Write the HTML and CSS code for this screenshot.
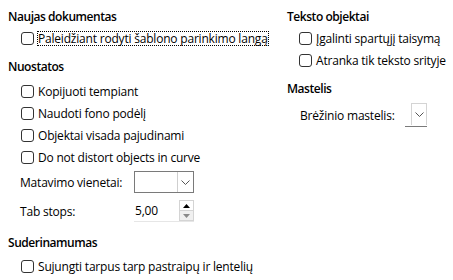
FILE: index.html
```html
<!DOCTYPE html>
<html lang="lt">
<head>
<meta charset="utf-8">
<link rel="stylesheet" href="styles.css">
</head>
<body>
<div class="page">
  <div class="col left">
    <div class="heading h1">Naujas dokumentas</div>
    <label class="row"><span class="box"></span><span class="focus">Paleidžiant rodyti šablono parinkimo langą</span></label>

    <div class="heading h2">Nuostatos</div>
    <label class="row first"><span class="box"></span><span>Kopijuoti tempiant</span></label>
    <label class="row"><span class="box"></span><span>Naudoti fono podėlį</span></label>
    <label class="row"><span class="box"></span><span>Objektai visada pajudinami</span></label>
    <label class="row"><span class="box"></span><span>Do not distort objects in curve</span></label>

    <div class="field combo-row">
      <span class="flabel">Matavimo vienetai:</span>
      <span class="combo"><span class="combo-btn"><svg width="9" height="5" viewBox="0 0 9 5"><path d="M0.5 0.5 L4.5 4.5 L8.5 0.5" fill="none" stroke="#555" stroke-width="1"/></svg></span></span>
    </div>
    <div class="field spin-row">
      <span class="flabel">Tab stops:</span>
      <span class="spin"><span class="spin-val">5,00</span><span class="spin-btns"><span class="up"><svg width="7" height="4" viewBox="0 0 7 4"><path d="M0 4 L3.5 0 L7 4 Z" fill="#000"/></svg></span><span class="down"><svg width="7" height="4" viewBox="0 0 7 4"><path d="M0 0 L3.5 4 L7 0 Z" fill="#8a8a8a"/></svg></span></span></span>
    </div>

    <div class="heading h3">Suderinamumas</div>
    <label class="row last"><span class="box"></span><span>Sujungti tarpus tarp pastraipų ir lentelių</span></label>
  </div>

  <div class="col right">
    <div class="heading h1">Teksto objektai</div>
    <label class="row"><span class="box"></span><span>Įgalinti spartųjį taisymą</span></label>
    <label class="row"><span class="box"></span><span>Atranka tik teksto srityje</span></label>

    <div class="heading h4">Mastelis</div>
    <div class="field scale-row">
      <span class="flabel">Brėžinio mastelis:</span>
      <span class="mini-combo"><span class="mini-btn"><svg width="9" height="5" viewBox="0 0 9 5"><path d="M0.5 0.5 L4.5 4.5 L8.5 0.5" fill="none" stroke="#555" stroke-width="1"/></svg></span></span>
    </div>
  </div>
</div>
</body>
</html>
```

FILE: styles.css
```css
html, body {
  margin: 0;
  padding: 0;
  background: #ffffff;
}
body {
  font-family: "Open Sans", "Noto Sans", "Liberation Sans", sans-serif;
  font-size: 12px;
  letter-spacing: -0.2px;
  color: #000;
  width: 453px;
  height: 280px;
  overflow: hidden;
}
.page {
  display: flex;
  padding-top: 7px;
}
.col {
  display: flex;
  flex-direction: column;
}
.left {
  padding-left: 8px;
  width: 279px;
}
.right {
  padding-left: 0;
}
.heading {
  font-weight: 600;
  letter-spacing: -0.45px;
  height: 20px;
  line-height: 20px;
}
.h2 { margin-top: 8px; }
.h3 { margin-top: 11px; }
.h4 { margin-top: 8px; }
.row {
  display: flex;
  align-items: center;
  height: 22px;
  padding-left: 13px;
  gap: 4px;
}
.right .row { padding-left: 12px; }
.row.first { margin-top: 3px; }
.row.last { margin-top: 2px; }
.box {
  width: 11px;
  height: 11px;
  border: 1px solid #333;
  border-radius: 3px;
  background: #fff;
  flex: none;
}
.focus {
  outline: 1px dotted #000;
  outline-offset: 0;
  line-height: 13px;
}
.field {
  display: flex;
  align-items: center;
  height: 22px;
  padding-left: 12px;
}
.flabel {
  width: 114px;
}
.combo-row { margin-top: 3px; }
.spin-row { margin-top: 7px; }
.combo {
  width: 58px;
  height: 20px;
  border: 1px solid #7a7a7a;
  background: #fff;
  display: flex;
  justify-content: flex-end;
}
.combo-btn {
  width: 15px;
  height: 20px;
  border-left: 1px solid #cfcfcf;
  display: flex;
  align-items: center;
  justify-content: center;
}
.spin {
  width: 60px;
  height: 21px;
  display: flex;
  background: #fff;
  border-bottom: 1px solid #e6e6e6;
}
.spin-val {
  flex: 1;
  line-height: 21px;
  padding-left: 1px;
}
.spin-btns {
  width: 15px;
  display: flex;
  flex-direction: column;
}
.spin-btns .up, .spin-btns .down {
  height: 10px;
  display: flex;
  align-items: center;
  justify-content: center;
  border: 1px solid #d4d4d4;
  box-sizing: border-box;
}
.spin-btns .up { background: #fff; height: 11px; }
.spin-btns .down { background: #f0f0f0; border-top: none; }
.scale-row {
  margin-top: 4px;
  height: 24px;
  padding-left: 13px;
}
.scale-row .flabel { width: 105px; }
.mini-combo {
  width: 22px;
  height: 23px;
  background: #fff;
  border-bottom: 1px solid #7a7a7a;
  display: flex;
  justify-content: flex-end;
}
.mini-btn {
  width: 16px;
  height: 22px;
  border: 1px solid #d4d4d4;
  border-bottom: none;
  box-sizing: border-box;
  display: flex;
  align-items: center;
  justify-content: center;
}
```
